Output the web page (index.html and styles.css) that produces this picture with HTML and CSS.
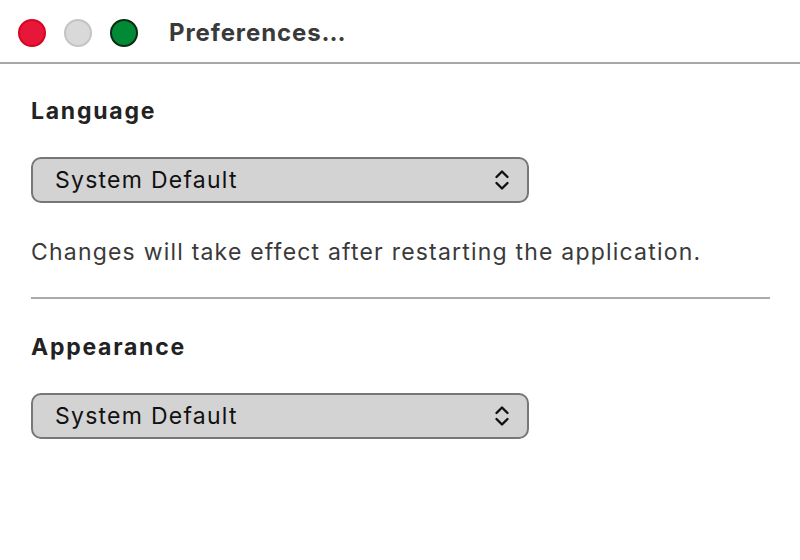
FILE: index.html
```html
<!DOCTYPE html>
<html>
<head>
<meta charset="utf-8">
<link rel="stylesheet" href="styles.css">
</head>
<body>
<div class="window">
  <div class="titlebar">
    <div class="lights">
      <span class="light close"></span>
      <span class="light mini"></span>
      <span class="light zoom"></span>
    </div>
    <div class="title">Preferences…</div>
  </div>
  <div class="content">
    <section class="group">
      <h2 class="heading">Language</h2>
      <div class="select">
        <span class="select-value">System Default</span>
        <svg class="chev" width="16" height="22" viewBox="0 0 16 22"><path d="M2.5 8 L8 2.5 L13.5 8 M2.5 14 L8 19.5 L13.5 14" fill="none" stroke="#111" stroke-width="2.4" stroke-linecap="round" stroke-linejoin="round"/></svg>
      </div>
      <p class="note">Changes will take effect after restarting the application.</p>
    </section>
    <hr class="divider">
    <section class="group">
      <h2 class="heading">Appearance</h2>
      <div class="select">
        <span class="select-value">System Default</span>
        <svg class="chev" width="16" height="22" viewBox="0 0 16 22"><path d="M2.5 8 L8 2.5 L13.5 8 M2.5 14 L8 19.5 L13.5 14" fill="none" stroke="#111" stroke-width="2.4" stroke-linecap="round" stroke-linejoin="round"/></svg>
      </div>
    </section>
  </div>
</div>
</body>
</html>
```

FILE: styles.css
```css
html, body {
  margin: 0;
  padding: 0;
  background: #ffffff;
}
body {
  font-family: Inter, "Noto Sans", sans-serif;
  color: #333333;
}
.window {
  width: 800px;
  height: 560px;
  background: #ffffff;
}
.titlebar {
  height: 59px;
  padding-top: 3px;
  border-bottom: 2px solid #a8a8a8;
  display: flex;
  align-items: center;
  padding-left: 18px;
}
.lights {
  display: flex;
  gap: 18px;
}
.light {
  width: 28px;
  height: 28px;
  border-radius: 50%;
  box-sizing: border-box;
  display: block;
}
.close {
  background: #e8173a;
  border: 2px solid #d5061f;
}
.mini {
  background: #d9d9d9;
  border: 2px solid #c4c4c4;
}
.zoom {
  background: #008a35;
  border: 2px solid #0d2a12;
}
.title {
  margin-left: 31px;
  font-size: 24px;
  font-weight: 700;
  color: #3a3a3a;
  letter-spacing: 0.9px;
}
.content {
  padding: 33px 30px 0 31px;
}
.heading {
  margin: 0;
  font-size: 23px;
  line-height: 28px;
  font-weight: 700;
  color: #222222;
  letter-spacing: 1.75px;
}
.select {
  margin-top: 32px;
  width: 498px;
  height: 46px;
  box-sizing: border-box;
  border: 2px solid #777777;
  border-radius: 10px;
  background: #d3d3d3;
  display: flex;
  align-items: center;
  justify-content: space-between;
  padding: 0 17px 0 22px;
}
.select-value {
  font-size: 23px;
  color: #111111;
  letter-spacing: 1.25px;
}
.chev {
  display: block;
}
.note {
  margin: 35px 0 0 0;
  font-size: 23px;
  line-height: 28px;
  color: #3a3a3a;
  letter-spacing: 1.2px;
}
.divider {
  margin: 31px 0 34px 0;
  border: 0;
  height: 2px;
  background: #aaaaaa;
}
```
